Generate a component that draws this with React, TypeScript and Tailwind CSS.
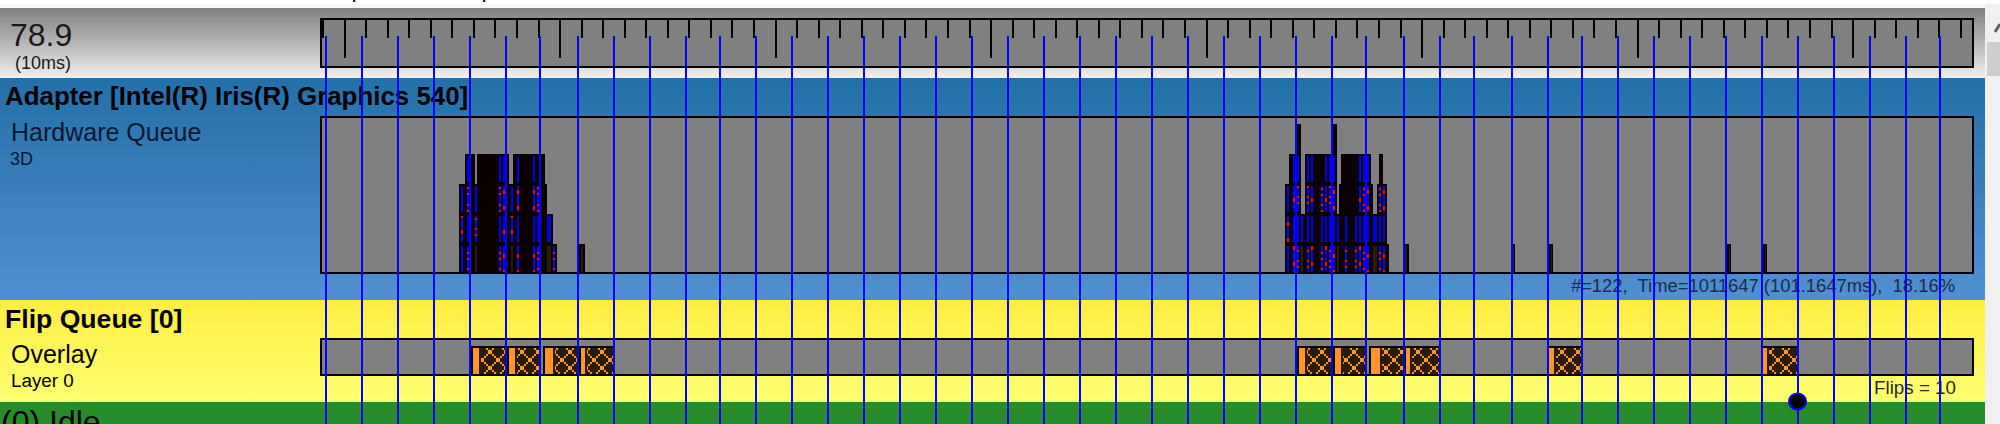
import React from 'react';

const FONT = "font-['Liberation_Sans',Arial,sans-serif]";

const blueLines = [
  325, 361, 397, 433, 469, 505, 539, 577, 613, 649, 685, 719, 755, 791, 827, 863, 899, 935, 971, 1007, 1043, 1079, 1115,
  1151, 1187, 1223, 1259, 1295, 1331, 1365, 1403, 1439, 1473, 1511, 1547, 1581, 1617, 1653, 1689, 1725, 1761, 1797,
  1833, 1869, 1905, 1939,
];

// x, width pairs
type Span = [number, number];
// x, [y...], height
type Dots = [number, number[], number?];

interface Lane {
  y: number;
  black: Span[];
  blue?: Span[];
  brown?: Span[];
}

const two = (xs: number[]): Span[] => xs.map((x) => [x, 2]);

const lanes: Lane[] = [
  // first burst
  { y: 154, black: [[465, 10], [477, 32], [513, 32]], blue: two([467, 499, 503, 517, 533]) },
  { y: 184, black: [[459, 88]], blue: two([461, 467, 475, 499, 503, 511, 517, 533, 537]) },
  { y: 214, black: [[459, 94]], blue: [...two([461, 467, 475, 499, 503, 511, 517, 533, 537]), [547, 4]] },
  {
    y: 244,
    black: [[459, 98], [579, 6]],
    blue: two([461, 467, 499, 503, 517, 533, 537, 553]),
    brown: [[475, 2], [511, 2], [547, 4], [581, 2]],
  },
  // second burst
  { y: 124, black: [[1297, 4], [1333, 4]] },
  {
    y: 154,
    black: [[1289, 12], [1305, 32], [1341, 30], [1379, 4]],
    blue: [[1293, 6], [1307, 2], [1311, 2], [1325, 2], [1329, 6], [1359, 2], [1363, 6]],
  },
  {
    y: 184,
    black: [[1285, 16], [1305, 32], [1339, 34], [1377, 10]],
    blue: [[1287, 2], [1293, 6], [1307, 2], [1311, 2], [1321, 2], [1325, 2], [1329, 6], [1359, 2], [1363, 6], [1379, 2], [1383, 2]],
  },
  {
    y: 214,
    black: [[1285, 102]],
    blue: [
      [1287, 2], [1293, 6], [1301, 2], [1307, 2], [1311, 2], [1321, 2], [1325, 2], [1329, 6], [1337, 2], [1345, 2], [1355, 2],
      [1359, 2], [1363, 6], [1373, 4], [1379, 2], [1383, 2],
    ],
  },
  {
    y: 244,
    black: [[1285, 104], [1405, 4], [1511, 4], [1549, 4], [1727, 4], [1763, 4]],
    blue: [
      [1287, 2], [1293, 6], [1307, 2], [1311, 2], [1321, 2], [1325, 2], [1329, 6], [1345, 2], [1355, 2], [1359, 2], [1363, 6],
      [1379, 2], [1383, 2],
    ],
    brown: [[1301, 2], [1337, 2], [1373, 4], [1405, 2], [1513, 1], [1551, 1], [1729, 1], [1765, 1]],
  },
];

const redDots: Dots[] = [
  // first burst
  [467, [187, 193, 204, 210, 252, 258, 268]],
  [499, [187, 193, 204, 210, 252, 258, 268]],
  [503, [190, 206, 230, 254], 4],
  [503, [270]],
  [517, [190, 206, 254], 4],
  [517, [270]],
  [533, [190, 206, 254], 4],
  [533, [270]],
  [537, [187, 193, 204, 210, 252, 258, 268]],
  [461, [216]],
  [461, [230], 4],
  [475, [218, 228, 234]],
  [511, [216]],
  [511, [230], 4],
  [553, [252, 258, 268]],
  // second burst
  [1297, [186, 196, 202, 250, 260, 266]],
  [1293, [198, 246, 262], 4],
  [1307, [186, 196, 202, 250, 260, 266]],
  [1311, [198, 246, 262], 4],
  [1321, [188, 194, 204, 210, 252, 258, 268]],
  [1325, [198, 246, 262], 4],
  [1329, [186, 196, 202, 250, 260, 266]],
  [1333, [190, 206, 254], 4],
  [1333, [270]],
  [1359, [198, 246, 262], 4],
  [1363, [188, 194, 204, 210, 252, 258, 268]],
  [1367, [190, 206, 254], 4],
  [1367, [270]],
  [1379, [188, 194, 204, 210, 252, 258, 268]],
  [1383, [190, 206, 254], 4],
  [1383, [270]],
  [1287, [222, 238], 4],
  [1345, [250, 260, 266]],
  [1355, [250, 260, 266]],
];

// x, orange start, orange end, end of the block
const flips: [number, number, number, number][] = [
  [471, 473, 479, 507],
  [507, 509, 515, 541],
  [543, 545, 553, 579],
  [579, 581, 585, 615],
  [1297, 1299, 1305, 1332],
  [1333, 1335, 1341, 1366],
  [1369, 1371, 1380, 1404],
  [1404, 1406, 1410, 1439],
  [1547, 1549, 1554, 1581],
  [1761, 1763, 1767, 1797],
];

const Ruler: React.FC = () => {
  const ticks = Array.from({ length: 77 }, (_, i) => i);
  return (
    <svg width="1650" height="46" viewBox="322 20 1650 46" shapeRendering="crispEdges" className="block">
      {ticks.map((i) => (
        <rect key={i} x={Math.round(322 + 21.55 * i)} y="20" width="2" height={i % 10 === 1 ? 38 : 18} fill="#000" />
      ))}
    </svg>
  );
};

const HardwareChart: React.FC = () => (
  <svg width="1650" height="154" viewBox="322 118 1650 154" shapeRendering="crispEdges" className="block">
    {lanes.map((lane, i) => (
      <g key={i}>
        {lane.black.map(([x, w]) => (
          <rect key={x} x={x} y={lane.y} width={w} height={30} fill="#0a0000" />
        ))}
        {lane.blue?.map(([x, w]) => (
          <rect key={x} x={x} y={lane.y + 2} width={w} height={26} fill="#0000e0" />
        ))}
        {lane.brown?.map(([x, w]) => (
          <rect key={x} x={x} y={lane.y + 2} width={w} height={26} fill="#2a1c04" />
        ))}
      </g>
    ))}
    {redDots.map(([x, ys, h], i) =>
      ys.map((y) => <rect key={`${i}-${y}`} x={x} y={y} width={2} height={h ?? 2} fill="#ff0000" />),
    )}
  </svg>
);

const OverlayChart: React.FC = () => {
  const cells: number[] = [0, 2, 4, 6, 8, 10, 12, 14];
  return (
    <svg width="1650" height="34" viewBox="322 340 1650 34" shapeRendering="crispEdges" className="block">
      <defs>
        <pattern id="flipHatch" x="2" y="344" width="16" height="16" patternUnits="userSpaceOnUse">
          {cells.map((c) => (
            <rect key={`a${c}`} x={c} y={c} width="2" height="2" fill="#ff9428" />
          ))}
          {cells.map((c) => (
            <rect key={`b${c}`} x={14 - c} y={c} width="2" height="2" fill="#ff9428" />
          ))}
        </pattern>
      </defs>
      {flips.map(([x, o0, o1, end]) => (
        <g key={x}>
          <rect x={x} y={346} width={end - x} height={28} fill="#000" />
          <rect x={o1} y={348} width={end - o1} height={26} fill="#2a1c04" />
          <rect x={o1 + 2} y={348} width={end - o1 - 2} height={26} fill="url(#flipHatch)" />
          <rect x={o0} y={348} width={o1 - o0} height={26} fill="#ff9428" />
        </g>
      ))}
    </svg>
  );
};

const App: React.FC = () => {
  return (
    <div className={`relative h-[424px] w-[2000px] overflow-hidden bg-[#f0f0f0] text-black ${FONT}`}>
      <div className="h-1 bg-white" />
      <div className="flex h-[420px]">
        <div className="w-[1985px] shrink-0">
          <div className="h-1 bg-[#f6f6f6]" />

          {/* Ruler */}
          <div className="flex h-[70px] bg-linear-to-b from-[#808080] to-[#f0f0f0]">
            <div className="w-[320px] shrink-0 pt-[11px]">
              <div className="pl-[10px] text-[32px] leading-none text-[#1a1a1a]">78.9</div>
              <div className="mt-[3px] pl-[15px] text-[18px] leading-none text-[#1a1a1a]">(10ms)</div>
            </div>
            <div className="mt-[10px] h-[50px] w-[1654px] border-2 border-black bg-[#808080]">
              <Ruler />
            </div>
          </div>

          {/* Adapter */}
          <div className="h-[222px] bg-linear-to-b from-[#2370a8] to-[#5090d2]">
            <div className="h-[38px] pt-[6px] pl-[5px] text-[25.9px] leading-none font-bold">
              Adapter [Intel(R) Iris(R) Graphics 540]
            </div>
            <div className="flex h-[184px]">
              <div className="w-[320px] shrink-0 pt-[4px]">
                <div className="pl-[11px] text-[25px] leading-none text-[#06182c]">Hardware Queue</div>
                <div className="mt-[5px] pl-[10px] text-[18px] leading-none text-[#06182c]">3D</div>
              </div>
              <div className="grow">
                <div className="h-[158px] w-[1654px] border-2 border-black bg-[#808080]">
                  <HardwareChart />
                </div>
                <div className="whitespace-pre pt-[3px] pr-[30px] text-right text-[18.4px] leading-none text-[#1c2c48]">
                  {'#=122,  Time=1011647 (101.1647ms),  18.16%'}
                </div>
              </div>
            </div>
          </div>

          {/* Flip queue */}
          <div className="h-[102px] bg-linear-to-b from-[#ffee40] to-[#ffff70]">
            <div className="h-[38px] pt-[6px] pl-[5px] text-[26.6px] leading-none font-bold">Flip Queue [0]</div>
            <div className="flex h-[64px]">
              <div className="w-[320px] shrink-0 pt-[4px]">
                <div className="pl-[11px] text-[25px] leading-none">Overlay</div>
                <div className="mt-[5px] pl-[11px] text-[18.8px] leading-none">Layer 0</div>
              </div>
              <div className="grow">
                <div className="h-[38px] w-[1654px] border-2 border-black bg-[#808080]">
                  <OverlayChart />
                </div>
                <div className="pt-[3px] pr-[29px] text-right text-[18.8px] leading-none text-[#2a2a1a]">Flips = 10</div>
              </div>
            </div>
          </div>

          <div className="h-[22px] overflow-hidden bg-[#288c2c] pt-[4px] pl-px text-[32px] leading-none">(0) Idle</div>
        </div>

        {/* Scroll bar */}
        <div className="w-[15px] shrink-0 pt-[38px] pl-[2px]">
          <div className="h-[34px] bg-[#cdcdcd]" />
        </div>
      </div>

      {/* Markers drawn over everything */}
      <svg
        width="2000"
        height="424"
        viewBox="0 0 2000 424"
        shapeRendering="crispEdges"
        className="pointer-events-none absolute top-0 left-0"
      >
        <rect x="352" y="0" width="1" height="2" fill="#ffffb0" />
        <rect x="353" y="0" width="2" height="2" fill="#401030" />
        <rect x="355" y="0" width="1" height="2" fill="#80d0ff" />
        <rect x="482" y="0" width="1" height="2" fill="#ffffb0" />
        <rect x="483" y="0" width="2" height="2" fill="#401030" />
        <rect x="485" y="0" width="1" height="2" fill="#80d0ff" />
        <path d="M1995 32 L2000 24" stroke="#606060" strokeWidth="3" fill="none" shapeRendering="auto" />
        {blueLines.map((x) => (
          <rect key={x} x={x} y="36" width="2" height="388" fill="#0000ff" />
        ))}
        <ellipse cx="1797.5" cy="401.5" rx="8.5" ry="8" fill="#000" stroke="#0000ff" strokeWidth="2" shapeRendering="auto" />
      </svg>
    </div>
  );
};

export default App;
